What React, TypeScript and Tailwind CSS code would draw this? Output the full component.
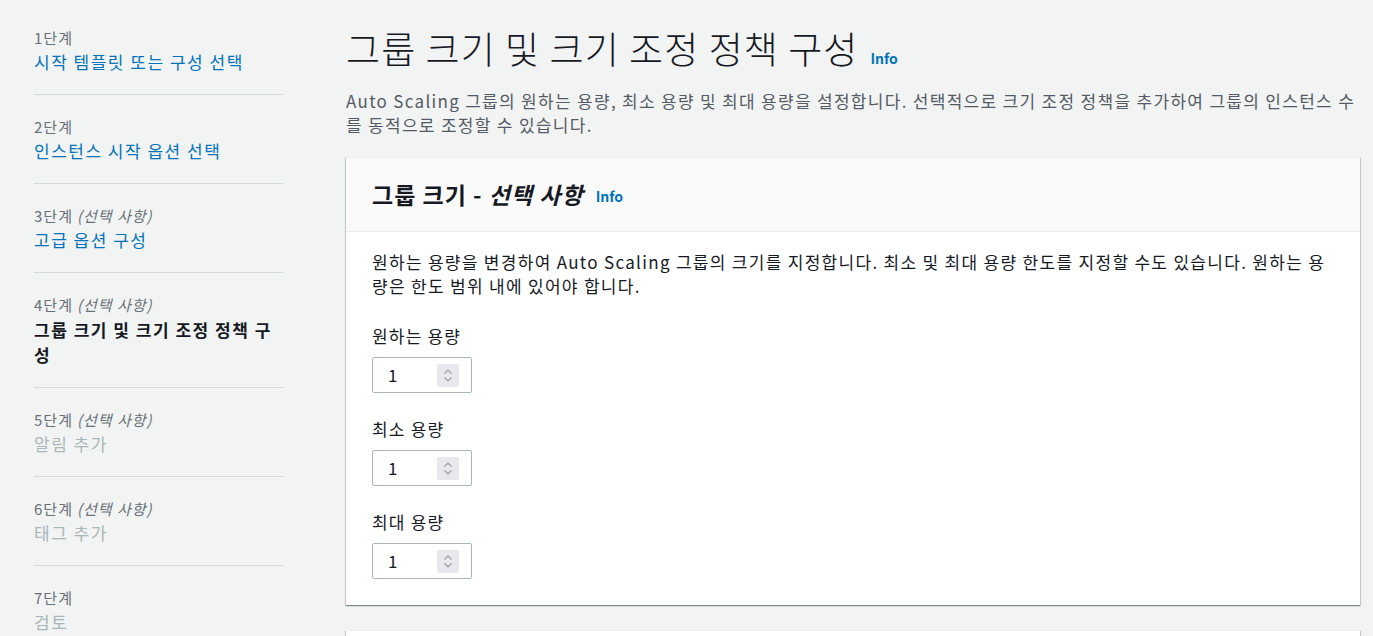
import { useState } from "react";

const font = { fontFamily: '"Noto Sans CJK KR", "Noto Sans", sans-serif' };

interface Step {
  label: string;
  optional?: boolean;
  title: string;
  state: "done" | "current" | "disabled";
}

const steps: Step[] = [
  { label: "1단계", title: "시작 템플릿 또는 구성 선택", state: "done" },
  { label: "2단계", title: "인스턴스 시작 옵션 선택", state: "done" },
  { label: "3단계", optional: true, title: "고급 옵션 구성", state: "done" },
  { label: "4단계", optional: true, title: "그룹 크기 및 크기 조정 정책 구성", state: "current" },
  { label: "5단계", optional: true, title: "알림 추가", state: "disabled" },
  { label: "6단계", optional: true, title: "태그 추가", state: "disabled" },
  { label: "7단계", title: "검토", state: "disabled" },
];

const cardShadow =
  "shadow-[0_1px_1px_0_rgba(0,28,36,0.3),1px_1px_1px_0_rgba(0,28,36,0.15),-1px_1px_1px_0_rgba(0,28,36,0.15)]";

function Spinner() {
  return (
    <div className="flex flex-col items-center justify-center w-[22px] h-[23px] bg-[#e9e9ed] rounded-[2px] shrink-0">
      <svg width="10" height="7" viewBox="0 0 10 7" className="mb-[1px]">
        <path d="M1.5 5.5 L5 2 L8.5 5.5" fill="none" stroke="#9a9aa2" strokeWidth="1.2" />
      </svg>
      <svg width="10" height="7" viewBox="0 0 10 7">
        <path d="M1.5 1.5 L5 5 L8.5 1.5" fill="none" stroke="#9a9aa2" strokeWidth="1.2" />
      </svg>
    </div>
  );
}

function NumberField({ label }: { label: string }) {
  const [value, setValue] = useState("1");
  return (
    <div className="flex flex-col">
      <div className="text-[17px] tracking-[1.2px] leading-[24px] text-[#16191f]">{label}</div>
      <div className="mt-[9px] flex items-center w-[100px] h-[36px] border border-[#aab7b8] rounded-[2px] bg-white pl-[15px] pr-[12px]">
        <input
          value={value}
          onChange={e => setValue(e.target.value)}
          className="w-full min-w-0 outline-none text-[17px] text-[#16191f] bg-transparent"
          style={font}
        />
        <Spinner />
      </div>
    </div>
  );
}

export default function App() {
  return (
    <div className="min-h-screen w-full bg-[#f2f3f3] flex overflow-hidden" style={font}>
      <nav className="w-[284px] shrink-0 pl-[34px] pt-[6px]">
        {steps.map((s, i) => (
          <div
            key={s.label}
            className={`pt-[22px] pb-[20px] ${i < steps.length - 1 ? "border-b border-[#d5dbdb]" : ""}`}
          >
            <div className="text-[15px] tracking-[1px] leading-[20px] text-[#687078]">
              {s.label}
              {s.optional && <i className="ml-1">(선택 사항)</i>}
            </div>
            <div
              className={`text-[17px] tracking-[1.5px] mt-[2px] ${
                s.state === "done"
                  ? "text-[#0073bb] leading-[24px]"
                  : s.state === "current"
                  ? "text-[#16191f] font-bold leading-[25px]"
                  : "text-[#aab7b8] leading-[24px]"
              }`}
            >
              {s.title}
            </div>
          </div>
        ))}
      </nav>

      <main className="flex-1 min-w-0 pl-[62px] pr-[13px] pt-[24px]">
        <div className="flex items-baseline">
          <h1 className="text-[37px] tracking-[1.1px] leading-[48px] font-light text-[#16191f]">
            그룹 크기 및 크기 조정 정책 구성
          </h1>
          <span className="ml-[12px] text-[14px] font-bold text-[#0073bb]">Info</span>
        </div>
        <p className="mt-[17px] text-[17px] tracking-[1.3px] leading-[24px] text-[#545b64]">
          Auto Scaling 그룹의 원하는 용량, 최소 용량 및 최대 용량을 설정합니다. 선택적으로 크기 조정 정책을 추가하여 그룹의 인스턴스 수를 동적으로 조정할 수 있습니다.
        </p>

        <section className={`mt-[20px] bg-white border-t border-[#eaeded] ${cardShadow}`}>
          <header className="bg-[#fafafa] border-b border-[#eaeded] px-[26px] h-[74px] flex items-center">
            <h2 className="text-[23px] tracking-[1px] font-bold text-[#16191f]">
              그룹 크기 - <i>선택 사항</i>
            </h2>
            <span className="ml-[12px] mt-[4px] text-[14px] font-bold text-[#0073bb]">Info</span>
          </header>
          <div className="px-[26px] pt-[18px] pb-[26px]">
            <p className="text-[17px] tracking-[1.3px] leading-[24px] text-[#16191f]">
              원하는 용량을 변경하여 Auto Scaling 그룹의 크기를 지정합니다. 최소 및 최대 용량 한도를 지정할 수도 있습니다. 원하는 용량은 한도 범위 내에 있어야 합니다.
            </p>
            <div className="mt-[26px] flex flex-col gap-[24px]">
              <NumberField label="원하는 용량" />
              <NumberField label="최소 용량" />
              <NumberField label="최대 용량" />
            </div>
          </div>
        </section>

        <section className={`mt-[25px] h-[40px] bg-white border-t border-[#eaeded] ${cardShadow}`} />
      </main>
    </div>
  );
}
